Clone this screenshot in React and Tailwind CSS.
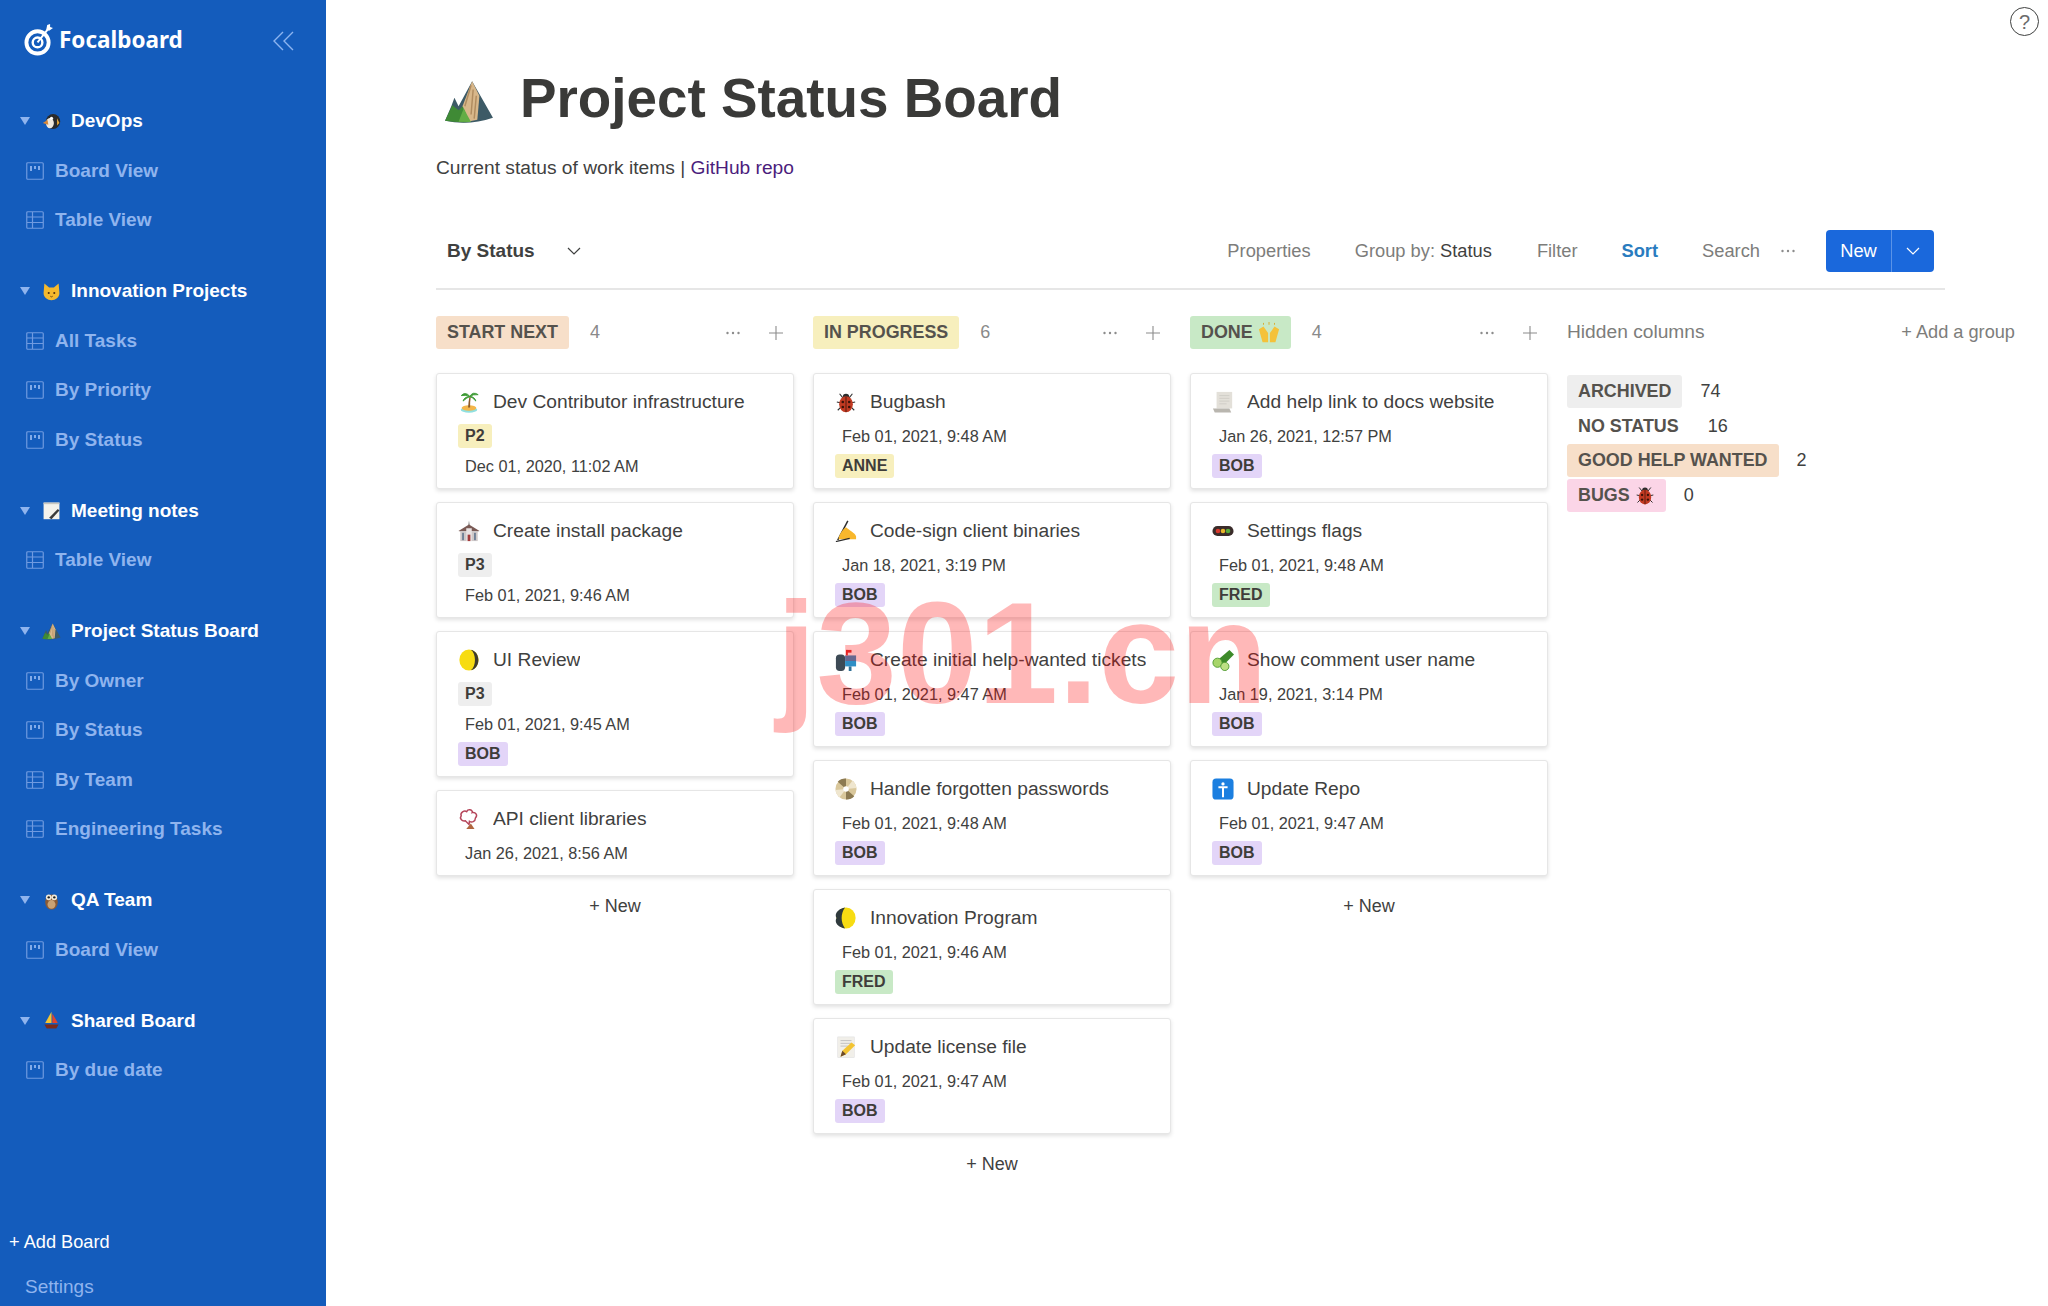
import React from "react";

// small colour drawings standing in for the emoji of the original
const Svg = ({ size = 22, children, className = "" }) => (
  <svg viewBox="0 0 24 24" width={size} height={size} className={`shrink-0 ${className}`}>
    {children}
  </svg>
);

const emojis = {
  palm: (
    <>
      <ellipse cx="12" cy="20.5" rx="9" ry="3.2" fill="#8fe0e0" />
      <ellipse cx="12" cy="18.5" rx="8" ry="3" fill="#f3b64a" />
      <path d="M11 18 Q11.5 11 12.5 6 L14 6 Q13 12 13.2 18 Z" fill="#8a5a2b" />
      <path d="M13 6 Q8 0 3.5 5 Q9 4 13 6 Q16 0 22 4 Q16 3.5 13 6 Q7 6 5.5 11 Q10 7 13 6 Q18 6 19.5 11 Q16 7 13 6Z" fill="#3d9a35" stroke="#3d9a35" strokeWidth="1" />
    </>
  ),
  school: (
    <>
      <path d="M12 0.5 L12.8 6 L11.2 6Z" fill="#777" />
      <path d="M0.5 12 L12 5 L23.5 12 L21 12.5 L3 12.5Z" fill="#7a5a55" />
      <rect x="2.5" y="12" width="19" height="11" fill="#cfc9c9" />
      <rect x="9" y="9" width="6" height="14" fill="#e8e2e2" />
      <rect x="4.5" y="14" width="2" height="8" fill="#6f7f95" />
      <rect x="17.5" y="14" width="2" height="8" fill="#6f7f95" />
      <rect x="10.5" y="16" width="3" height="7" fill="#a33b3b" />
    </>
  ),
  moonRight: (
    <>
      <ellipse cx="12" cy="12" rx="10.5" ry="11.5" fill="#f7dc12" />
      <path d="M14 0.7 C20 5 20 19 14 23.3 C25 21 25 3 14 0.7Z" fill="#3d3b30" />
    </>
  ),
  moonLeft: (
    <>
      <ellipse cx="12" cy="12" rx="10.5" ry="11.5" fill="#f7dc12" />
      <path d="M11 0.6 C3 2 -1 8 1.6 12 C-1 17 3 22 11 23.4 C6 17 6 7 11 0.6Z" fill="#2f3a3d" />
    </>
  ),
  cloud: (
    <>
      <path d="M12 2 C15 1.5 16 4 15.5 5 C19 4 22 8 19 11 C19 15 15 16 12.5 14.5 L12 18 L8 14 C4 15 1.5 11 3.5 8.5 C2 5 7 2 9.5 4 C10 3 11 2 12 2Z" fill="none" stroke="#b5455a" strokeWidth="1.6" />
      <path d="M9 23 L14 17 L18 23Z" fill="#b0663f" />
    </>
  ),
  bug: (
    <>
      <path d="M5 3 L9 8 M19 3 L15 8 M2 12 L7 13 M22 12 L17 13 M3 21 L7 17 M21 21 L17 17" stroke="#333" strokeWidth="1.2" />
      <circle cx="12" cy="6.5" r="3.5" fill="#2c2c2c" />
      <ellipse cx="12" cy="14.5" rx="7.5" ry="8.8" fill="#c23a22" />
      <path d="M12 6 V23" stroke="#4a1a10" strokeWidth="1" />
      <circle cx="8.5" cy="12" r="1.4" fill="#3a1208" />
      <circle cx="15.5" cy="12" r="1.4" fill="#3a1208" />
      <circle cx="8.5" cy="17.5" r="1.4" fill="#3a1208" />
      <circle cx="15.5" cy="17.5" r="1.4" fill="#3a1208" />
    </>
  ),
  hand: (
    <>
      <path d="M3 22 L14 1" stroke="#2c2c2c" strokeWidth="1.6" />
      <path d="M4 20 C5 15 9 10 12 8 C15 11 22 14 23 18 L23 21 L4 21Z" fill="#f8b72c" />
      <path d="M1 23.5 L16 20" stroke="#2c2c2c" strokeWidth="1.4" />
    </>
  ),
  mailbox: (
    <>
      <rect x="1" y="6" width="10" height="18" rx="4" fill="#3d4a55" />
      <rect x="11" y="7" width="12" height="12" fill="#2f8fc6" />
      <rect x="15" y="19" width="3" height="5" fill="#2f6f95" />
      <rect x="12" y="1" width="2" height="6" fill="#d33" />
      <rect x="12" y="1" width="6" height="3" fill="#d33" />
    </>
  ),
  disc: (
    <>
      <circle cx="12" cy="12" r="11.5" fill="#d9c79b" />
      <path d="M12 12 L3 4 A11.5 11.5 0 0 1 12 0.5Z M12 12 L21 20 A11.5 11.5 0 0 1 12 23.5Z" fill="#8c7a52" />
      <path d="M12 12 L23.5 11 A11.5 11.5 0 0 0 19 3Z M12 12 L0.5 13 A11.5 11.5 0 0 0 5 21Z" fill="#efe6cf" />
      <circle cx="12" cy="12" r="3" fill="#fff" />
    </>
  ),
  memo: (
    <>
      <rect x="3" y="1" width="18" height="22.5" fill="#f1efe9" stroke="#ddd" strokeWidth="0.6" />
      <path d="M6 5 H18 M6 8 H18 M6 11 H14" stroke="#b9b9b9" strokeWidth="0.9" />
      <path d="M6 22.5 L8 16 L18 7 L22 10 L12 20Z" fill="#f3c432" />
      <path d="M6 22.5 L8 16 L12 20Z" fill="#6b4a2c" />
    </>
  ),
  scroll: (
    <>
      <path d="M5 1 H22 V19 H5Z" fill="#e3e0d9" />
      <path d="M1 19 H19 L21 23.5 H3Z" fill="#b9b6af" />
      <path d="M8 5 H19 M8 8 H19 M8 11 H19 M8 14 H16" stroke="#cdcac3" strokeWidth="0.9" />
    </>
  ),
  traffic: (
    <>
      <rect x="0.5" y="6.5" width="23" height="11" rx="5.5" fill="#3a2c2a" />
      <circle cx="6.5" cy="12" r="2.5" fill="#d8392c" />
      <circle cx="12" cy="12" r="2.5" fill="#e8b52a" />
      <circle cx="17.5" cy="12" r="2.5" fill="#58ab3a" />
    </>
  ),
  cucumber: (
    <>
      <path d="M5 13 L19 1 L24 6 L11 19Z" fill="#3d8a2a" />
      <circle cx="6" cy="15" r="5" fill="#a7d56a" stroke="#4f9a30" />
      <circle cx="14" cy="19" r="4.5" fill="#bde084" stroke="#4f9a30" />
    </>
  ),
  info: (
    <>
      <rect x="0.5" y="0.5" width="23" height="23" rx="4" fill="#1b7fe0" />
      <circle cx="12" cy="6.5" r="1.8" fill="#fff" />
      <path d="M7 10 H17 M12 10 V21" stroke="#fff" strokeWidth="2.2" />
    </>
  ),
  penguin: (
    <>
      <ellipse cx="14" cy="12" rx="9" ry="9.5" fill="#2b2b2b" />
      <ellipse cx="10" cy="14" rx="5" ry="6.5" fill="#f1e9dd" />
      <circle cx="12" cy="8" r="2" fill="#fff" />
      <path d="M1 14 L7 10 L8 16Z" fill="#d9893a" />
      <path d="M19 8 L22 14 L19 17Z" fill="#e8a93a" />
    </>
  ),
  cat: (
    <>
      <path d="M3 2 L9 7 H15 L21 2 L22 14 C22 20 17 23 12 23 C7 23 2 20 2 14Z" fill="#f5b92d" />
      <circle cx="8.5" cy="14" r="1.3" fill="#4a2c10" />
      <circle cx="15.5" cy="14" r="1.3" fill="#4a2c10" />
      <path d="M10.5 18 Q12 19.5 13.5 18" stroke="#4a2c10" fill="none" strokeWidth="1" />
    </>
  ),
  notes: (
    <>
      <rect x="2" y="2" width="20" height="21" fill="#f4f2ec" />
      <path d="M2 2 H22 V4 H2Z" fill="#c9c7c0" />
      <path d="M9 21 L20 10 L22 12 L12 23Z" fill="#3a3a3a" />
    </>
  ),
  mountain: (
    <>
      <path d="M0.5 21 L3.5 14 L5 10 L7 14 L13.5 2 L23.5 19.5 Q12 23.5 0.5 21Z" fill="#3d5a66" />
      <path d="M6 21.5 L13.5 2 L17 9 L16 20.5 Q10 22 6 21.5Z" fill="#d8b78a" />
      <path d="M13 4 L10 14 M14 6 L13 18 M15.5 9 L14.5 20" stroke="#b08c60" strokeWidth="0.7" />
      <path d="M0.5 21 L4 13.5 L7 16 L9 14 L12 21.6 Q6 22 0.5 21Z" fill="#3f8a35" />
      <path d="M7 21.5 L9.5 15 L11 18 L13 21.6Z" fill="#63ad45" />
    </>
  ),
  owl: (
    <>
      <ellipse cx="12" cy="14" rx="8" ry="9.5" fill="#8a5a33" />
      <ellipse cx="12" cy="17" rx="5" ry="5.5" fill="#c9a274" />
      <circle cx="8.5" cy="8" r="3.6" fill="#f0e8d8" />
      <circle cx="15.5" cy="8" r="3.6" fill="#f0e8d8" />
      <circle cx="8.5" cy="8" r="1.5" fill="#222" />
      <circle cx="15.5" cy="8" r="1.5" fill="#222" />
    </>
  ),
  boat: (
    <>
      <path d="M12 1 L12 15 L4 15Z" fill="#f3c432" />
      <path d="M13 3 L20 15 L13 15Z" fill="#e2452e" />
      <path d="M3 17 H21 L18 22 H6Z" fill="#7a2c1c" />
    </>
  ),
};

const Emoji = ({ name, size }) => <Svg size={size}>{emojis[name]}</Svg>;

const BoardIcon = () => (
  <svg viewBox="0 0 18 18" width="18" height="18" fill="none" className="shrink-0">
    <rect x="0.75" y="0.75" width="16.5" height="16.5" rx="1" stroke="#6f9ae0" strokeWidth="1.2" />
    <path d="M5 4 V9 M9 4 V7 M13 4 V8" stroke="#8fb4ee" strokeWidth="1.8" />
  </svg>
);

const TableIcon = () => (
  <svg viewBox="0 0 18 18" width="18" height="18" fill="none" className="shrink-0">
    <rect x="0.75" y="0.75" width="16.5" height="16.5" rx="1" stroke="#6f9ae0" strokeWidth="1.2" />
    <path d="M1 6 H17 M1 11.5 H17 M6.5 1 V17" stroke="#6f9ae0" strokeWidth="1.2" />
  </svg>
);

const Dots = () => (
  <svg viewBox="0 0 16 4" width="16" height="4" className="shrink-0">
    <circle cx="2.5" cy="2" r="1.2" fill="#8c8c8c" />
    <circle cx="8" cy="2" r="1.2" fill="#8c8c8c" />
    <circle cx="13.5" cy="2" r="1.2" fill="#8c8c8c" />
  </svg>
);

const Plus = () => (
  <svg viewBox="0 0 14 14" width="14" height="14" className="shrink-0">
    <path d="M7 0 V14 M0 7 H14" stroke="#8c8c8c" strokeWidth="1.1" />
  </svg>
);

const Chevron = ({ color = "#3f4140" }) => (
  <svg viewBox="0 0 14 8" width="14" height="8" fill="none">
    <path d="M1 1 L7 7 L13 1" stroke={color} strokeWidth="1.2" />
  </svg>
);

const Hands = () => (
  <svg viewBox="0 0 24 24" width="22" height="22" className="shrink-0">
    <path d="M1 8 L6 5 L11 12 L11 22 L5 22 Z M23 8 L18 5 L13 12 L13 22 L19 22 Z" fill="#f4c23a" />
    <path d="M6 1 V3 M12 0 V3 M18 1 V3" stroke="#d9a92a" strokeWidth="1" />
  </svg>
);

const sections = [
  { emoji: "penguin", title: "DevOps", items: [["board", "Board View"], ["table", "Table View"]] },
  {
    emoji: "cat",
    title: "Innovation Projects",
    items: [["table", "All Tasks"], ["board", "By Priority"], ["board", "By Status"]],
  },
  { emoji: "notes", title: "Meeting notes", items: [["table", "Table View"]] },
  {
    emoji: "mountain",
    title: "Project Status Board",
    items: [["board", "By Owner"], ["board", "By Status"], ["table", "By Team"], ["table", "Engineering Tasks"]],
  },
  { emoji: "owl", title: "QA Team", items: [["board", "Board View"]] },
  { emoji: "boat", title: "Shared Board", items: [["board", "By due date"]] },
];

const tagColors = {
  peach: "bg-[#f7dfc9]",
  yellow: "bg-[#f7efbd]",
  green: "bg-[#c8e9c6]",
  purple: "bg-[#e3d5f8]",
  grey: "bg-[#eeeeee]",
  pink: "bg-[#fbd5e7]",
  none: "",
};

const Tag = ({ color, children }) => (
  <span className={`inline-flex h-[24px] items-center rounded-[3px] px-[7px] text-[16px] font-bold text-[#3f3d3a] ${tagColors[color]}`}>
    {children}
  </span>
);

const HeadTag = ({ color, children }) => (
  <span className={`inline-flex h-[33px] items-center gap-[5px] rounded-[3px] px-[11px] text-[17.9px] font-bold text-[#55524d] ${tagColors[color]}`}>
    {children}
  </span>
);

const bob = ["BOB", "purple"];
const fred = ["FRED", "green"];

const columns = [
  {
    title: "START NEXT",
    color: "peach",
    count: 4,
    cards: [
      { emoji: "palm", title: "Dev Contributor infrastructure", prio: ["P2", "yellow"], date: "Dec 01, 2020, 11:02 AM" },
      { emoji: "school", title: "Create install package", prio: ["P3", "grey"], date: "Feb 01, 2021, 9:46 AM" },
      { emoji: "moonRight", title: "UI Review", prio: ["P3", "grey"], date: "Feb 01, 2021, 9:45 AM", owner: bob },
      { emoji: "cloud", title: "API client libraries", date: "Jan 26, 2021, 8:56 AM" },
    ],
  },
  {
    title: "IN PROGRESS",
    color: "yellow",
    count: 6,
    cards: [
      { emoji: "bug", title: "Bugbash", date: "Feb 01, 2021, 9:48 AM", owner: ["ANNE", "yellow"] },
      { emoji: "hand", title: "Code-sign client binaries", date: "Jan 18, 2021, 3:19 PM", owner: bob },
      { emoji: "mailbox", title: "Create initial help-wanted tickets", date: "Feb 01, 2021, 9:47 AM", owner: bob },
      { emoji: "disc", title: "Handle forgotten passwords", date: "Feb 01, 2021, 9:48 AM", owner: bob },
      { emoji: "moonLeft", title: "Innovation Program", date: "Feb 01, 2021, 9:46 AM", owner: fred },
      { emoji: "memo", title: "Update license file", date: "Feb 01, 2021, 9:47 AM", owner: bob },
    ],
  },
  {
    title: "DONE",
    hands: true,
    color: "green",
    count: 4,
    cards: [
      { emoji: "scroll", title: "Add help link to docs website", date: "Jan 26, 2021, 12:57 PM", owner: bob },
      { emoji: "traffic", title: "Settings flags", date: "Feb 01, 2021, 9:48 AM", owner: fred },
      { emoji: "cucumber", title: "Show comment user name", date: "Jan 19, 2021, 3:14 PM", owner: bob },
      { emoji: "info", title: "Update Repo", date: "Feb 01, 2021, 9:47 AM", owner: bob },
    ],
  },
];

const hidden = [
  { title: "ARCHIVED", color: "grey", count: 74 },
  { title: "NO STATUS", color: "none", count: 16 },
  { title: "GOOD HELP WANTED", color: "peach", count: 2 },
  { title: "BUGS", color: "pink", count: 0, bug: true },
];

function Sidebar() {
  return (
    <aside className="flex h-full w-[326px] shrink-0 flex-col bg-[#145cbc] text-[19px]">
      <div className="flex h-[96.5px] shrink-0 items-start justify-between pt-[23px] pr-[32px] pl-[24px]">
        <div className="flex items-center gap-[6px] text-white">
          <svg viewBox="0 0 30 34" width="29" height="33" fill="none">
            <circle cx="14" cy="20" r="11.5" stroke="#fff" strokeWidth="4" />
            <circle cx="14" cy="20" r="5" stroke="#fff" strokeWidth="2.5" />
            <path d="M14 20 L25 6" stroke="#fff" strokeWidth="2" />
            <path d="M23 7 L24 2 L27 1 L27 4 L30 5 L26 8Z" fill="#fff" />
          </svg>
          <span className="font-['Noto_Sans',sans-serif] text-[22.5px] font-bold">Focalboard</span>
        </div>
        <svg viewBox="0 0 22 20" width="22" height="20" fill="none" className="mt-[8px]">
          <path d="M11 1 L2 10 L11 19 M21 1 L12 10 L21 19" stroke="#8db4f0" strokeWidth="1.4" />
        </svg>
      </div>
      {sections.map((s) => (
        <div key={s.title} className="mb-[21.5px]">
          <div className="flex h-[49.5px] items-center font-bold text-white">
            <span className="mr-[12px] ml-[20px] h-0 w-0 border-x-[5px] border-t-[8px] border-x-transparent border-t-[#8fb4ee]" />
            <span className="flex w-[29px]">
              <Emoji name={s.emoji} size={19} />
            </span>
            {s.title}
          </div>
          {s.items.map(([type, label]) => (
            <div key={label} className="flex h-[49.5px] items-center gap-[11px] pl-[26px] font-bold text-[#8fb4ee]">
              {type === "board" ? <BoardIcon /> : <TableIcon />}
              {label}
            </div>
          ))}
        </div>
      ))}
      <div className="mt-auto -mb-[4px]">
        <div className="flex h-[45px] items-center pl-[9px] text-[18.2px] text-white">+ Add Board</div>
        <div className="flex h-[45px] items-center pl-[25px] text-[#8fb4ee]">Settings</div>
      </div>
    </aside>
  );
}

function Card({ card }) {
  return (
    <div className="rounded-[3px] border border-[#e6e6e6] bg-white pt-[13px] pr-[10px] pb-[7px] pl-[21px] shadow-[0_2px_4px_rgba(0,0,0,0.12)]">
      <div className="mb-[4px] flex h-[30px] items-center text-[19.2px]">
        <span className="flex w-[35px]">
          <Emoji name={card.emoji} size={22} />
        </span>
        <span className="truncate">{card.title}</span>
      </div>
      {card.prio && (
        <div className="flex h-[30px] items-center">
          <Tag color={card.prio[1]}>{card.prio[0]}</Tag>
        </div>
      )}
      <div className="flex h-[30px] items-center pl-[7px] text-[16.3px]">{card.date}</div>
      {card.owner && (
        <div className="flex h-[30px] items-center">
          <Tag color={card.owner[1]}>{card.owner[0]}</Tag>
        </div>
      )}
    </div>
  );
}

function Column({ col }) {
  return (
    <div className="w-[358px] shrink-0">
      <div className="mb-[24px] flex h-[33px] items-center">
        <HeadTag color={col.color}>
          {col.title}
          {col.hands && <Hands />}
        </HeadTag>
        <span className="ml-[21px] text-[18px] text-[#8a8a8a]">{col.count}</span>
        <span className="ml-auto flex items-center gap-[28px] pr-[11px]">
          <Dots />
          <Plus />
        </span>
      </div>
      <div className="flex flex-col gap-[13px]">
        {col.cards.map((c) => (
          <Card key={c.title} card={c} />
        ))}
      </div>
      <div className="mt-[16px] flex h-[28px] items-center justify-center text-[18px]">+ New</div>
    </div>
  );
}

function Toolbar() {
  return (
    <div className="flex h-[60px] w-[1509px] items-start border-b-2 border-[#e6e6e6] px-[11px] text-[18.3px] text-[#7d7d7b]">
      <div className="flex h-[42px] items-center text-[19px] font-bold text-[#3f4140]">
        By Status
        <span className="ml-[32px] flex">
          <Chevron />
        </span>
      </div>
      <div className="ml-auto flex h-[42px] items-center">
        <span>Properties</span>
        <span className="ml-[44px]">
          Group by: <span className="text-[#3f4140]">Status</span>
        </span>
        <span className="ml-[45px]">Filter</span>
        <span className="ml-[44px] font-bold text-[#2a7cbf]">Sort</span>
        <span className="ml-[44px]">Search</span>
        <span className="ml-[20px]">
          <Dots />
        </span>
        <div className="ml-[30px] flex h-[42px] w-[108px] items-center rounded-[4px] bg-[#1a68dc] text-white">
          <span className="flex w-[66px] justify-center border-r border-[#5a93e8] leading-[42px]">New</span>
          <span className="flex flex-1 justify-center">
            <Chevron color="#ffffff" />
          </span>
        </div>
      </div>
    </div>
  );
}

function HiddenColumn() {
  return (
    <div className="w-[448px] shrink-0">
      <div className="mb-[26px] flex h-[33px] items-center justify-between text-[#7d7d7b]">
        <span className="text-[19.2px]">Hidden columns</span>
        <span className="text-[18.2px]">+ Add a group</span>
      </div>
      <div className="flex flex-col gap-[1.5px]">
        {hidden.map((h) => (
          <div key={h.title} className="flex items-center">
            <HeadTag color={h.color}>
              {h.title}
              {h.bug && <Emoji name="bug" size={20} />}
            </HeadTag>
            <span className="ml-[18px] text-[18px]">{h.count}</span>
          </div>
        ))}
      </div>
    </div>
  );
}

export default function App() {
  return (
    <div className="relative flex h-screen overflow-hidden bg-white font-['Liberation_Sans',Arial,sans-serif] text-[#3f4140]">
      <Sidebar />
      <main className="min-w-0 flex-1 pl-[110px]">
        <div className="flex h-[135px] items-end pb-[2px]">
          <span className="ml-[8px] flex w-[76px] pb-[6px]">
            <Emoji name="mountain" size={50} />
          </span>
          <h1 className="text-[54.8px] leading-[70px] font-bold text-[#3a3a38]">Project Status Board</h1>
        </div>
        <p className="mt-[18.5px] h-[28px] text-[19.2px] leading-[28px]">
          Current status of work items | <span className="text-[#4b1d7c]">GitHub repo</span>
        </p>
        <div className="mt-[48.5px]">
          <Toolbar />
        </div>
        <div className="mt-[26px] flex gap-[19px]">
          {columns.map((c) => (
            <Column key={c.title} col={c} />
          ))}
          <HiddenColumn />
        </div>
      </main>
      {/* help button, top right */}
      <div className="absolute top-[7px] right-[9px] flex h-[29px] w-[29px] items-center justify-center rounded-full border border-[#3f4140] text-[20px] text-[#6b6b6b]">
        ?
      </div>
      {/* site watermark over the page */}
      <div className="pointer-events-none absolute top-[581px] left-[776px] text-[145px] leading-none font-bold text-[rgba(255,0,0,0.28)]">
        j301.cn
      </div>
    </div>
  );
}
